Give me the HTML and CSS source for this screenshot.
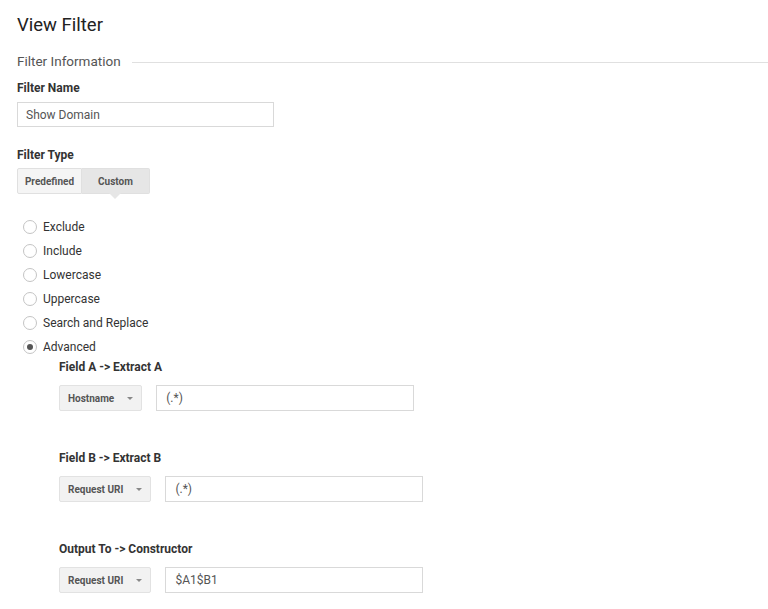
FILE: index.html
```html
<!DOCTYPE html>
<html lang="en">
<head>
  <meta charset="UTF-8">
  <title>View Filter</title>
  <link rel="stylesheet" href="styles.css">
</head>
<body>

  <h1 class="baslik">View Filter</h1>

  <div class="bolum">
    <span>Filter Information</span>
    <div class="cizgi"></div>
  </div>

  <div class="etiket ilk">Filter Name</div>
  <div class="kutu genis">Show Domain</div>

  <div class="etiket">Filter Type</div>
  <div class="sekmeler">
    <div class="sekme">Predefined</div>
    <div class="sekme secili">Custom</div>
  </div>

  <!-- filtre turleri -->
  <div class="secenekler">
    <div class="secenek"><span class="yuvarlak"></span>Exclude</div>
    <div class="secenek"><span class="yuvarlak"></span>Include</div>
    <div class="secenek"><span class="yuvarlak"></span>Lowercase</div>
    <div class="secenek"><span class="yuvarlak"></span>Uppercase</div>
    <div class="secenek"><span class="yuvarlak"></span>Search and Replace</div>
    <div class="secenek"><span class="yuvarlak dolu"></span>Advanced</div>
  </div>

  <div class="gelismis">
    <div class="alan">
      <div class="alan-baslik">Field A -&gt; Extract A</div>
      <div class="satir">
        <div class="acilir">Hostname <span class="ok"></span></div>
        <div class="kutu">(.*)</div>
      </div>
    </div>

    <div class="alan">
      <div class="alan-baslik">Field B -&gt; Extract B</div>
      <div class="satir">
        <div class="acilir">Request URI <span class="ok"></span></div>
        <div class="kutu">(.*)</div>
      </div>
    </div>

    <div class="alan">
      <div class="alan-baslik">Output To -&gt; Constructor</div>
      <div class="satir">
        <div class="acilir">Request URI <span class="ok"></span></div>
        <div class="kutu">$A1$B1</div>
      </div>
    </div>
  </div>

</body>
</html>
```

FILE: styles.css
```css
body {
  font-family: Roboto, "Liberation Sans", Arial, sans-serif;
  background-color: #fff;
  color: #333;
  margin: 0;
  padding: 0 0 0 17px;
}
.baslik {
  font-size: 18.5px;
  font-weight: normal;
  line-height: 24px;
  margin: 13px 0 0;
  color: #222;
}
.bolum {
  display: flex;
  align-items: center;
  margin-top: 15px;
  height: 18px;
  font-size: 13.5px;
  color: #555;
}
.cizgi {
  flex: 1;
  height: 1px;
  background-color: #e0e0e0;
  margin-left: 11px;
  margin-top: 2px;
}
.etiket {
  font-size: 12px;
  font-weight: bold;
  line-height: 16px;
  margin-top: 20px;
  color: #333;
}
.etiket.ilk {
  margin-top: 10px;
}
.kutu {
  box-sizing: border-box;
  height: 26px;
  width: 258px;
  border: 1px solid #d9d9d9;
  padding: 0 9px;
  font-size: 12px;
  line-height: 24px;
  color: #555;
}
.kutu.genis {
  width: 257px;
  height: 25px;
  line-height: 25px;
  padding: 0 8px;
  margin-top: 6px;
}
.sekmeler {
  display: flex;
  margin-top: 5px;
}
.sekme {
  position: relative;
  box-sizing: border-box;
  width: 65px;
  height: 26px;
  text-align: center;
  font-size: 10px;
  font-weight: bold;
  line-height: 26px;
  color: #555;
  background-color: #f5f5f5;
  border: 1px solid #e0e0e0;
  border-radius: 2px 0 0 2px;
}
.sekme.secili {
  width: 68px;
  background-color: #e6e6e6;
  border-left: none;
  border-radius: 0 2px 2px 0;
}
.sekme.secili::after {
  content: "";
  position: absolute;
  left: 27px;
  top: 24px;
  border-left: 6px solid transparent;
  border-right: 6px solid transparent;
  border-top: 6px solid #e6e6e6;
}
.secenekler {
  margin-top: 21px;
  padding-left: 6px;
}
.secenek {
  display: flex;
  align-items: center;
  height: 24px;
  font-size: 12px;
  color: #333;
}
.yuvarlak {
  box-sizing: border-box;
  width: 14px;
  height: 14px;
  border: 1px solid #c4c4c4;
  border-radius: 50%;
  margin-right: 6px;
  display: flex;
  align-items: center;
  justify-content: center;
}
.yuvarlak.dolu::after {
  content: "";
  width: 6px;
  height: 6px;
  border-radius: 50%;
  background-color: #555;
}
.gelismis {
  padding-left: 42px;
  margin-top: 1px;
}
.alan {
  margin-bottom: 40px;
}
.alan-baslik {
  font-size: 12px;
  font-weight: bold;
  line-height: 14px;
  color: #333;
}
.satir {
  display: flex;
  gap: 14px;
  margin-top: 11px;
}
.acilir {
  box-sizing: border-box;
  height: 26px;
  display: flex;
  align-items: center;
  padding: 0 8px;
  font-size: 10px;
  font-weight: bold;
  color: #555;
  background-color: #f2f2f2;
  border: 1px solid #e2e2e2;
  border-radius: 2px;
}
.ok {
  margin-left: 13px;
  border-left: 3px solid transparent;
  border-right: 3px solid transparent;
  border-top: 3px solid #888;
}
```
